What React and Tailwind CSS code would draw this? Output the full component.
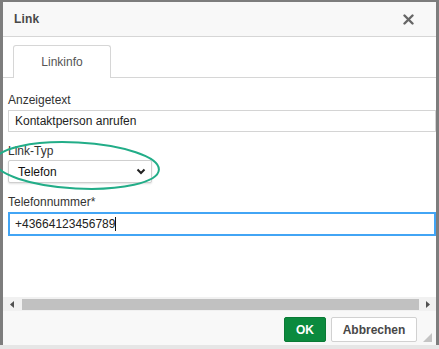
import React from "react";

const Label = ({ children }) => (
  <div className="text-[12px] leading-[15px] text-[#333]">{children}</div>
);

export default function App() {
  return (
    <div className="relative w-[439px] h-[349px] overflow-hidden bg-[#7d7d7d] pl-[3px] pt-[2px] font-['Liberation_Sans',Arial,sans-serif]">
      <div className="w-[433px] h-[343px] bg-white flex flex-col">
        {/* title bar */}
        <div className="h-[35px] shrink-0 bg-[#f8f8f8] border-b border-[#d6d6d6] flex items-center justify-between pl-[11px] pr-[22px]">
          <span className="text-[12px] font-bold text-[#484848] tracking-[0.2px]">Link</span>
          <svg width="11" height="11" viewBox="0 0 11 11">
            <path d="M1.5 1.5 L9.5 9.5 M9.5 1.5 L1.5 9.5" stroke="#666" strokeWidth="2.4" strokeLinecap="round" />
          </svg>
        </div>

        {/* body */}
        <div className="flex-1 flex flex-col overflow-hidden">
          <div className="flex-1 pt-[9px]">
            <div className="h-[32px] border-b border-[#d6d6d6] pl-[10px] flex items-end">
              <div className="w-[98px] h-[33px] -mb-px bg-white border border-b-0 border-[#d6d6d6] rounded-t-[3px] flex items-center justify-center text-[12px] text-[#555]">
                Linkinfo
              </div>
            </div>

            <div className="pl-[5px] pt-[15px] flex flex-col">
              <Label>Anzeigetext</Label>
              <div className="mt-[2px] h-[22px] w-[428px] border border-[#d4d4d4] bg-white flex items-center pl-[6px] text-[12px] text-[#222]">
                Kontaktperson anrufen
              </div>

              <div className="mt-[12px]">
                <Label>Link-Typ</Label>
              </div>
              <div className="mt-[1px] h-[23px] w-[144px] border border-[#cfcfcf] rounded-[2px] bg-white shadow-[0_1px_2px_rgba(0,0,0,0.12)] flex items-center justify-between pl-[9px] pr-[5px] text-[12px] text-[#111]">
                <span>Telefon</span>
                <svg width="10" height="7" viewBox="0 0 10 7">
                  <path d="M1.5 1.5 L5 5 L8.5 1.5" stroke="#222" strokeWidth="2" fill="none" />
                </svg>
              </div>

              <div className="mt-[12px]">
                <Label>Telefonnummer*</Label>
              </div>
              <div className="mt-[2px] h-[24px] w-[428px] border-2 border-[#42a5f5] bg-white flex items-center pl-[5px] text-[12px] text-[#222]">
                +43664123456789
                <span className="inline-block w-px h-[14px] bg-[#111]" />
              </div>
            </div>
          </div>

          {/* horizontal scrollbar */}
          <div className="h-[14px] shrink-0 bg-[#f1f1f1] flex items-center">
            <div className="w-[19px] flex justify-center">
              <svg width="5" height="7" viewBox="0 0 5 7"><path d="M4 0 L0 3.5 L4 7 Z" fill="#505050" /></svg>
            </div>
            <div className="flex-1 h-[11px] bg-[#c1c1c1]" />
            <div className="w-[17px] flex justify-center">
              <svg width="5" height="7" viewBox="0 0 5 7"><path d="M1 0 L5 3.5 L1 7 Z" fill="#505050" /></svg>
            </div>
          </div>

          {/* footer */}
          <div className="h-[34px] shrink-0 bg-[#f8f8f8] flex items-start justify-end pt-[6px] pr-[19px] gap-[5px] relative">
            <div className="w-[42px] h-[25px] bg-[#0b8a3e] border border-[#0a7a36] rounded-[2px] flex items-center justify-center text-[12px] font-bold text-white">
              OK
            </div>
            <div className="w-[86px] h-[25px] bg-white border border-[#d1d1d1] rounded-[2px] flex items-center justify-center text-[12px] font-bold text-[#484848]">
              Abbrechen
            </div>
            <svg className="absolute right-[4px] bottom-[3px]" width="9" height="9" viewBox="0 0 9 9">
              <path d="M9 0 L9 9 L0 9 Z" fill="#c4c4c4" />
            </svg>
          </div>
        </div>
      </div>

      {/* page behind the dialog, peeking out at the bottom */}
      <div className="h-[4px] bg-[#e6e6e6] -ml-[3px]" />

      {/* annotation ellipse */}
      <svg className="absolute left-0 top-0 pointer-events-none" width="439" height="349">
        <ellipse cx="77" cy="165.5" rx="82" ry="23" transform="rotate(3 77 165.5)" fill="none" stroke="#22ad88" strokeWidth="2" />
      </svg>
    </div>
  );
}
